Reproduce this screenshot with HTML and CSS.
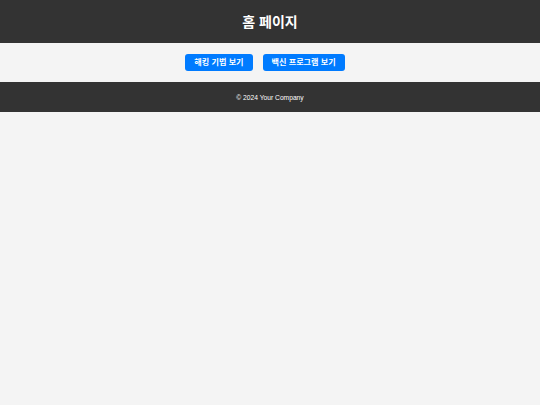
FILE: index.html
```html
<!DOCTYPE html>
<html lang="ko">
<head>
<meta charset="utf-8">
<title>홈 페이지</title>
<link rel="stylesheet" href="styles.css">
</head>
<body>
<header class="site-header">
  <h1 class="site-title">홈 페이지</h1>
</header>
<main class="actions">
  <a class="btn" href="#">해킹 기법 보기</a>
  <a class="btn" href="#">백신 프로그램 보기</a>
</main>
<footer class="site-footer">
  <p class="copyright">© 2024 Your Company</p>
</footer>
</body>
</html>
```

FILE: styles.css
```css
html, body {
  margin: 0;
  padding: 0;
}
body {
  background: #f4f4f4;
  font-family: "Liberation Sans", Arial, "Noto Sans CJK KR", sans-serif;
  color: #333;
}
.site-header {
  background: #333;
  color: #fff;
  height: 43px;
  display: flex;
  align-items: center;
  justify-content: center;
}
.site-title {
  margin: 0;
  font-size: 14px;
  font-weight: bold;
  line-height: 1;
}
.actions {
  display: flex;
  justify-content: center;
  padding: 11px 0;
}
.btn {
  display: block;
  height: 17px;
  line-height: 17px;
  padding: 0 9px;
  margin-right: 10px;
  background: #007bff;
  color: #fff;
  font-size: 8.1px;
  font-weight: bold;
  text-decoration: none;
  border-radius: 3px;
}
.site-footer {
  background: #333;
  color: #fff;
  height: 30px;
  display: flex;
  align-items: center;
  justify-content: center;
}
.copyright {
  margin: 0;
  font-size: 6.7px;
}
```
